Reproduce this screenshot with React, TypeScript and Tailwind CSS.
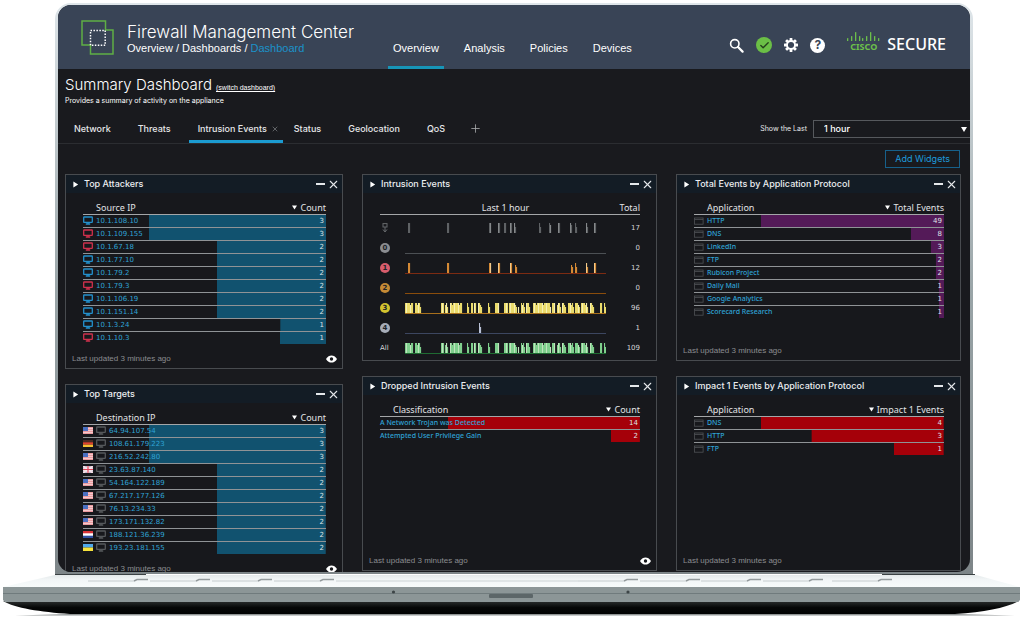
import type { ReactNode } from "react";
import { Check, Plus, X } from "lucide-react";

type Flag = "us" | "de" | "gb" | "nl" | "ua";

type Row = {
  label: string;
  count: number;
  bar: number; // share of the row width, in percent
  host?: "clean" | "infected" | "unknown";
  flag?: Flag;
};

const BLUE = "#11526f";
const PURPLE = "#541a58";
const RED = "#a50009";

const attackers: Row[] = [
  { label: "10.1.108.10", count: 3, bar: 73, host: "clean" },
  { label: "10.1.109.155", count: 3, bar: 73, host: "infected" },
  { label: "10.1.67.18", count: 2, bar: 45, host: "infected" },
  { label: "10.1.77.10", count: 2, bar: 45, host: "clean" },
  { label: "10.1.79.2", count: 2, bar: 45, host: "clean" },
  { label: "10.1.79.3", count: 2, bar: 45, host: "infected" },
  { label: "10.1.106.19", count: 2, bar: 45, host: "clean" },
  { label: "10.1.151.14", count: 2, bar: 45, host: "clean" },
  { label: "10.1.3.24", count: 1, bar: 19, host: "clean" },
  { label: "10.1.10.3", count: 1, bar: 19, host: "infected" },
];

const targets: Row[] = [
  { label: "64.94.107.54", count: 3, bar: 73, host: "unknown", flag: "us" },
  { label: "108.61.179.223", count: 3, bar: 73, host: "unknown", flag: "de" },
  { label: "216.52.242.80", count: 3, bar: 73, host: "unknown", flag: "us" },
  { label: "23.63.87.140", count: 2, bar: 45, host: "unknown", flag: "gb" },
  { label: "54.164.122.189", count: 2, bar: 45, host: "unknown", flag: "us" },
  { label: "67.217.177.126", count: 2, bar: 45, host: "unknown", flag: "us" },
  { label: "76.13.234.33", count: 2, bar: 45, host: "unknown", flag: "us" },
  { label: "173.171.132.82", count: 2, bar: 45, host: "unknown", flag: "us" },
  { label: "188.121.36.239", count: 2, bar: 45, host: "unknown", flag: "nl" },
  { label: "193.23.181.155", count: 2, bar: 45, host: "unknown", flag: "ua" },
];

const protocols: Row[] = [
  { label: "HTTP", count: 49, bar: 73 },
  { label: "DNS", count: 8, bar: 13 },
  { label: "LinkedIn", count: 3, bar: 5 },
  { label: "FTP", count: 2, bar: 3 },
  { label: "Rubicon Project", count: 2, bar: 3 },
  { label: "Daily Mail", count: 1, bar: 2 },
  { label: "Google Analytics", count: 1, bar: 2 },
  { label: "Scorecard Research", count: 1, bar: 2 },
];

const impact: Row[] = [
  { label: "DNS", count: 4, bar: 73 },
  { label: "HTTP", count: 3, bar: 53 },
  { label: "FTP", count: 1, bar: 20 },
];

const dropped: Row[] = [
  { label: "A Network Trojan was Detected", count: 14, bar: 74 },
  { label: "Attempted User Privilege Gain", count: 2, bar: 11 },
];

// [start, end] on a 201 unit wide time line
const busy = [
  [0, 8], [10, 16], [36, 39], [40, 43], [45, 57], [62, 64], [66, 68], [69, 71], [73, 77],
  [83, 85], [90, 94], [99, 103], [104, 112], [113, 114], [116, 120], [121, 125], [128, 146],
  [147, 150], [152, 156], [157, 161], [163, 169], [170, 175], [176, 183], [185, 189],
  [195, 197], [199, 201],
];
const dots = (xs: number[]) => xs.map((x) => [x, x + 2]);

const levels = [
  { id: "host", total: 17, badge: "", line: "", fill: "#5f6265", alt: "#85888a", spans: dots([3, 42, 84, 93, 99, 105, 109, 134, 144, 153, 165, 170, 181, 189]) },
  { id: "0", total: 0, badge: "#8b8d91", line: "#4c5054", fill: "", alt: "", spans: [] },
  { id: "1", total: 12, badge: "#d85d6c", line: "#7c2b12", fill: "#d58a35", alt: "#f2c98b", spans: dots([3, 42, 84, 93, 105, 110, 166, 170, 181, 189]) },
  { id: "2", total: 0, badge: "#c58a35", line: "#8a4d0c", fill: "", alt: "", spans: [] },
  { id: "3", total: 96, badge: "#d3c32f", line: "#a86f1c", fill: "#eadb6c", alt: "#f6efb4", spans: busy },
  { id: "4", total: 1, badge: "#a7adb9", line: "#3c4660", fill: "#b9c1d6", alt: "#e4e8f2", spans: dots([74]) },
  { id: "All", total: 109, badge: "", line: "#1f6b32", fill: "#7fcf8d", alt: "#bfe3bd", spans: busy },
];

function FlagIcon({ code }: { code: Flag }) {
  return (
    <svg viewBox="0 0 10 7" className="w-[10px] h-[7px] shrink-0" aria-hidden="true">
      {code === "us" && (
        <>
          <rect width="10" height="7" fill="#f3c9cb" />
          <path d="M0 .5h10M0 2.5h10M0 4.5h10M0 6.5h10" stroke="#eb9a9f" strokeWidth="1" />
          <rect width="5" height="4" fill="#4a6fc0" />
        </>
      )}
      {code === "de" && (
        <>
          <rect width="10" height="2.4" fill="#4a2a22" />
          <rect y="2.3" width="10" height="2.4" fill="#e0432f" />
          <rect y="4.7" width="10" height="2.3" fill="#f5c034" />
        </>
      )}
      {code === "gb" && (
        <>
          <rect width="10" height="7" fill="#a9a3c8" />
          <path d="M0 0l10 7M10 0L0 7" stroke="#f4dfe4" strokeWidth="2" />
          <path d="M5 0v7M0 3.5h10" stroke="#fbeef0" strokeWidth="2.6" />
          <path d="M5 0v7M0 3.5h10" stroke="#e0455a" strokeWidth="1.2" />
        </>
      )}
      {code === "nl" && (
        <>
          <rect width="10" height="7" fill="#fff" />
          <rect width="10" height="2.3" fill="#d83338" />
          <rect y="4.7" width="10" height="2.3" fill="#2e4fa0" />
        </>
      )}
      {code === "ua" && (
        <>
          <rect width="10" height="3.5" fill="#4fa8ea" />
          <rect y="3.5" width="10" height="3.5" fill="#f7e33c" />
        </>
      )}
    </svg>
  );
}

function HostIcon({ kind }: { kind: "clean" | "infected" | "unknown" }) {
  const color = { clean: "#2390cc", infected: "#d0304c", unknown: "#55585b" }[kind];
  return (
    <svg viewBox="0 0 10 9" className="w-[10px] h-[9px] shrink-0" fill="none" stroke={color} strokeWidth="1.3" aria-hidden="true">
      <rect x=".7" y="1" width="8.6" height="5.4" rx=".5" />
      <path d="M5 6.4v1.5M2.8 8h4.4" />
    </svg>
  );
}

function WindowIcon() {
  return (
    <svg viewBox="0 0 10 8" className="w-[10px] h-[8px] shrink-0" fill="none" stroke="#4f5255" strokeWidth=".8" aria-hidden="true">
      <rect x=".5" y="1" width="8.6" height="6.2" />
      <path d="M.5 2.5h8.6" />
    </svg>
  );
}

function EyeIcon() {
  return (
    <svg viewBox="0 0 11 8" className="w-[11px] h-[8px]" aria-hidden="true">
      <path d="M0 4C1.6 1.4 3.4.4 5.5.4S9.4 1.4 11 4C9.400 6.600 7.600 7.600 5.500 7.600S1.600 6.600 0 4z" fill="#fff" />
      <circle cx="5.5" cy="4" r="1.7" fill="#17181c" />
    </svg>
  );
}

function Widget({ title, tall, eye, footer = true, children }: { title: string; tall?: boolean; eye?: boolean; footer?: boolean; children: ReactNode }) {
  return (
    <section className={`flex shrink-0 flex-col border border-[#484b4f] bg-[#17181c] ${tall ? "min-h-[195px]" : "min-h-[187px]"}`}>
      <div className="flex h-[18px] items-center bg-[#131c25] pl-[7px] pr-[2px]">
        <svg viewBox="0 0 6 8" className="w-[6px] h-[7px]" aria-hidden="true">
          <path d="M0 .5l5.5 3.5L0 7.5z" fill="#fff" />
        </svg>
        <h2 className="ml-[5px] flex-1 text-[9px] leading-[14px] font-medium text-[#eceef0]">{title}</h2>
        <button type="button" aria-label="Minimize" className="flex h-3 w-[9px] items-center">
          <span className="h-[2px] w-full bg-[#e4e7ea]" />
        </button>
        <button type="button" aria-label="Close" className="ml-[2px]">
          <X className="h-[13px] w-[13px] text-[#e4e7ea]" strokeWidth={2} />
        </button>
      </div>
      <div className="flex-1 pl-[17px] pr-4">{children}</div>
      {footer && (
        <div className="flex h-[18px] items-center justify-between pl-[6px] pr-[5px] font-['Liberation_Sans',sans-serif] text-[8px] text-[#8b8d90]">
          <span>Last updated 3 minutes ago</span>
          {eye && (
            <button type="button" aria-label="View">
              <EyeIcon />
            </button>
          )}
        </div>
      )}
    </section>
  );
}

function CountTable({ name, value, rows, color, plain }: { name: string; value: string; rows: Row[]; color: string; plain?: boolean }) {
  return (
    <table className="w-full border-collapse">
      <thead>
        <tr className="h-[21px] border-b border-[#a4a6a8] font-['Noto_Sans',sans-serif] text-[9px] leading-[11px] text-[#e2e3e5]">
          <th className="p-0 pb-px pl-[13px] text-left align-bottom font-normal">{name}</th>
          <th className="p-0 pb-px text-right align-bottom font-normal">
            <div className="flex items-center justify-end gap-[3px]">
              <svg viewBox="0 0 6 5" className="w-[5px] h-[5px]" aria-hidden="true">
                <path d="M0 0h6L3 5z" fill="#fff" />
              </svg>
              {value}
            </div>
          </th>
        </tr>
      </thead>
      <tbody>
        {rows.map((row) => (
          <tr
            key={row.label}
            className="h-[13px] border-b border-[#8f9396] text-[7px] leading-[10px] last:border-b-0"
            style={{ background: `linear-gradient(to left, ${color} ${row.bar}%, transparent ${row.bar}%)` }}
          >
            <td className="p-0">
              <div className="flex items-center gap-[3px]">
                {row.flag && <FlagIcon code={row.flag} />}
                {row.host && <HostIcon kind={row.host} />}
                {!row.host && !plain && <WindowIcon />}
                <a
                  href="#"
                  className={`text-[#2fa3d6] ${row.host ? "font-['DejaVu_Sans',sans-serif]" : "font-['Noto_Sans',sans-serif] font-medium"}`}
                >
                  {row.label}
                </a>
              </div>
            </td>
            <td className="p-0 pr-[2px] text-right font-['DejaVu_Sans',sans-serif] text-[#dfe3e6]">{row.count}</td>
          </tr>
        ))}
      </tbody>
    </table>
  );
}

function Spark({ spans, fill, alt, line }: { spans: number[][]; fill: string; alt: string; line: string }) {
  const bars = spans.flatMap(([from, to]) => {
    const out = [];
    for (let x = from; x < to; x += 1) {
      const last = x === to - 1 && from % 3 !== 0;
      const drop = last ? 4 : x % 7 === 5 ? 2 : 0;
      out.push(<rect key={x} x={x} y={1 + drop} width="1.1" height={10 - drop} fill={x % 4 === 1 ? alt : fill} />);
    }
    return out;
  });
  return (
    <svg viewBox="0 0 201 12" preserveAspectRatio="none" className="h-3 w-full" aria-hidden="true">
      {bars}
      {line && <rect y="11" width="201" height="1" fill={line} />}
    </svg>
  );
}

function LevelBadge({ id, color }: { id: string; color: string }) {
  if (id === "host") {
    return (
      <svg viewBox="0 0 10 10" className="h-[10px] w-[10px]" fill="none" stroke="#66696c" aria-hidden="true">
        <rect x="3" y=".6" width="4" height="3.4" />
        <path d="M5 4v5M3 6.5L5 9l2-2.5" />
      </svg>
    );
  }
  if (!color) return <span className="text-[#d4d6d8]">{id}</span>;
  return (
    <span className="flex h-[10px] w-[10px] items-center justify-center rounded-full font-bold text-[#22252a]" style={{ backgroundColor: color }}>
      {id}
    </span>
  );
}

function IntrusionTable() {
  return (
    <table className="w-full border-collapse">
      <thead>
        <tr className="h-[21px] border-b border-[#a4a6a8] font-['Noto_Sans',sans-serif] text-[9px] leading-[11px] text-[#e2e3e5]">
          <th className="w-[25px] p-0" />
          <th className="p-0 pb-px text-center align-bottom font-normal">Last 1 hour</th>
          <th className="w-[34px] p-0 pb-px text-right align-bottom font-normal">Total</th>
        </tr>
      </thead>
      <tbody className="font-['DejaVu_Sans',sans-serif] text-[7px] leading-[10px]">
        <tr className="h-1"><td colSpan={3} className="p-0" /></tr>
        {levels.map((level) => (
          <tr key={level.id} className="h-5">
            <td className="p-0"><LevelBadge id={level.id} color={level.badge} /></td>
            <td className="p-0"><div className="flex"><Spark {...level} /></div></td>
            <td className="p-0 text-right text-[#d4d6d8]">{level.total}</td>
          </tr>
        ))}
      </tbody>
    </table>
  );
}

function Logo() {
  return (
    <svg viewBox="0 0 33 35" className="h-[35px] w-[33px]" fill="none" aria-hidden="true">
      <path d="M1 1h23.5v9H32v24H9.5v-9H1z" stroke="#5fae45" strokeWidth="1.5" />
      <path d="M9.5 10.5h14.7v14.8H9.5z" stroke="#fff" strokeWidth="1.5" strokeDasharray="1.5 1.45" />
    </svg>
  );
}

function CiscoBars() {
  const bars = [[0, 6, 3], [4, 4, 5], [8, 0, 9], [12, 4, 5], [15, 6, 3], [19, 4, 5], [23, 0, 9], [27, 4, 5], [31, 6, 3]];
  return (
    <svg viewBox="0 0 33 10" className="h-[10px] w-[33px]" aria-hidden="true">
      {bars.map(([x, y, h]) => (
        <rect key={x} x={x} y={y} width="1.3" height={h} rx=".6" fill="#6cc04a" />
      ))}
    </svg>
  );
}

function SearchIcon() {
  return (
    <svg viewBox="0 0 15 15" className="h-[15px] w-[15px]" fill="none" stroke="#fff" aria-hidden="true">
      <circle cx="5.8" cy="5.8" r="4.2" strokeWidth="1.6" />
      <path d="M9 9l4.6 4.6" strokeWidth="2.2" strokeLinecap="round" />
    </svg>
  );
}

function Gear() {
  const teeth = [0, 45, 90, 135, 180, 225, 270, 315];
  return (
    <svg viewBox="0 0 14 14" className="h-[14px] w-[14px]" aria-hidden="true">
      {teeth.map((angle) => (
        <rect key={angle} x="5.6" y="0" width="2.8" height="3" rx=".5" fill="#fff" transform={`rotate(${angle} 7 7)`} />
      ))}
      <circle cx="7" cy="7" r="4" fill="none" stroke="#fff" strokeWidth="1.9" />
    </svg>
  );
}

const nav = ["Overview", "Analysis", "Policies", "Devices"];
const tabs = ["Network", "Threats", "Intrusion Events", "Status", "Geolocation", "QoS"];

function Header() {
  return (
    <header className="flex h-16 shrink-0 items-center bg-[#394456] pl-[23px] pr-6 text-white">
      <Logo />
      <div className="ml-[13px] whitespace-nowrap pt-[2px]">
        <h1 className="text-[17px] font-light leading-5">Firewall Management Center</h1>
        <p className="font-['Liberation_Sans',sans-serif] text-[11px] leading-[13px]">
          Overview / Dashboards / <a href="#" className="text-[#1b92c9]">Dashboard</a>
        </p>
      </div>
      <nav className="ml-[34px] flex gap-[15px] self-stretch font-['Liberation_Sans',sans-serif] text-[11px]">
        {nav.map((item) => (
          <a
            key={item}
            href="#"
            className={`flex items-end border-b-[3px] px-[5px] pb-[10px] leading-4 ${item === "Overview" ? "border-[#1795b8]" : "border-transparent"}`}
          >
            {item}
          </a>
        ))}
      </nav>
      <div className="ml-auto flex items-center gap-3 pt-4">
        <button type="button" aria-label="Search"><SearchIcon /></button>
        <button type="button" aria-label="Status" className="flex h-4 w-4 items-center justify-center rounded-full bg-[#6bbf46] text-[#25401d]">
          <Check className="h-[11px] w-[11px]" strokeWidth={3} />
        </button>
        <button type="button" aria-label="Settings"><Gear /></button>
        <button type="button" aria-label="Help" className="flex h-[15px] w-[15px] items-center justify-center rounded-full bg-white text-[12px] font-bold leading-none text-[#394456]">
          ?
        </button>
      </div>
      <div className="ml-[22px] flex items-start gap-[7px] pt-[14px] font-['Noto_Sans',sans-serif]">
        <div className="flex flex-col items-center">
          <CiscoBars />
          <span className="text-[9px] font-bold leading-[9px] text-[#6cc04a]">CISCO</span>
        </div>
        <span className="text-base font-medium leading-6">SECURE</span>
      </div>
    </header>
  );
}

function TabBar() {
  return (
    <div className="flex h-[31px] items-end justify-between border-b border-[#2b2d31] pl-[7px]">
      <div className="flex gap-[2px] text-[9px] font-medium text-[#e6e7e9]">
        {tabs.map((tab) => {
          const active = tab === "Intrusion Events";
          return (
            <button
              key={tab}
              type="button"
              className={`flex h-[25px] items-center gap-1 whitespace-nowrap border-b-[3px] pl-[9px] pr-1 pb-px ${active ? "border-[#1b9bd1]" : "border-transparent"}`}
            >
              {tab}
              <X className={`h-2 w-2 ${active ? "text-[#85888b]" : "invisible"}`} />
            </button>
          );
        })}
        <button type="button" aria-label="Add tab" className="flex h-[25px] items-center pb-1 pl-[6px]">
          <Plus className="h-[13px] w-[13px] text-[#a9abad]" strokeWidth={1.5} />
        </button>
      </div>
      <div className="mb-[5px] flex items-center gap-[6px]">
        <label htmlFor="range" className="text-[7px] text-[#e6e7e9]">Show the Last</label>
        <div className="relative flex items-center">
          <select id="range" className="h-[18px] w-[157px] appearance-none border border-r-0 border-[#56595d] bg-transparent pl-[10px] text-[9px] font-medium text-white">
            <option>1 hour</option>
          </select>
          <svg viewBox="0 0 6 5" className="pointer-events-none absolute right-[3px] h-[5px] w-[6px]" aria-hidden="true">
            <path d="M0 0h6L3 5z" fill="#fff" />
          </svg>
        </div>
      </div>
    </div>
  );
}

function LaptopBase() {
  const keys = [88, 150, 212, 274, 578, 640, 701, 763, 832];
  return (
    <svg viewBox="0 0 1024 44" preserveAspectRatio="none" className="h-11 w-full shrink-0" aria-hidden="true">
      <defs>
        <linearGradient id="deck" x1="0" y1="0" x2="0" y2="1">
          <stop offset="0" stopColor="#e4e9ea" />
          <stop offset=".4" stopColor="#f2f6f7" />
          <stop offset="1" stopColor="#f7fbfb" />
        </linearGradient>
        <linearGradient id="under" x1="0" y1="0" x2="0" y2="1">
          <stop offset="0" stopColor="#2b2f2f" />
          <stop offset=".5" stopColor="#060707" />
          <stop offset="1" stopColor="#000" />
        </linearGradient>
      </defs>
      <path d="M55 1H976L1020 13H3z" fill="url(#deck)" />
      <path d="M55 0H146V1H55zM882 0H975V1H882z" fill="#3a4143" />
      <path d="M336 7H578" stroke="#cdd4d5" strokeWidth="1" />
      {keys.map((x) => (
        <g key={x} fill="none">
          <path d={`M${x} 7h46`} stroke="#c6cdce" strokeWidth="1" />
          <path d={`M${x + 46} 7l3-1.500h11`} stroke="#949b9d" strokeWidth="1.4" />
        </g>
      ))}
      <path d="M3 27H1019C1005 34 985 38 955 40H70C40 38 15 34 3 27z" fill="url(#under)" />
      <path d="M3 13H1020V26L1018 28H5L3 26z" fill="#8c9697" />
      <path d="M3 19.5H1020" stroke="#707b7d" strokeWidth="1" />
      <rect x="489" y="20" width="44" height="4" rx="1" fill="#5c6668" />
      <circle cx="393.5" cy="18" r="1.6" fill="#3d4547" />
      <circle cx="628" cy="18" r="1.6" fill="#3d4547" />
      <path d="M15 41.5L70 40H955L1015 41.5z" fill="#8f9393" />
    </svg>
  );
}

export default function App() {
  return (
    <div className="flex h-screen flex-col overflow-hidden bg-white pt-[3px] font-['Inter',sans-serif]">
      <div className="ml-[55px] mr-[51px] flex min-h-0 flex-1 flex-col rounded-t-[16px] bg-linear-to-b from-[#dfe6ea] via-[#9aa5a8] to-[#7d8588] px-[3px] pb-[2px] pt-[2px]">
        <div className="flex min-h-0 flex-1 flex-col overflow-hidden rounded-[13px] bg-[#191a1e] text-white">
          <Header />
          <main className="flex min-h-0 flex-1 flex-col">
            <div className="pl-[7px] pt-[6px]">
              <div className="flex items-baseline gap-1">
                <h2 className="text-[15px] font-light leading-5">Summary Dashboard</h2>
                <a href="#" className="font-['Liberation_Sans',sans-serif] text-[7px] underline">(switch dashboard)</a>
              </div>
              <p className="text-[7px] leading-[11px]">Provides a summary of activity on the appliance</p>
            </div>
            <div className="mt-[7px]"><TabBar /></div>
            <div className="flex justify-end pr-[10px] pt-[6px]">
              <button type="button" className="h-[18px] border border-[#17608a] px-[9px] text-[9px] text-[#1e9bdc]">Add Widgets</button>
            </div>
            <div className="mt-[6px] grid min-h-0 flex-1 grid-cols-[278fr_295fr_285fr] gap-x-[19px] pl-[7px] pr-[9px]">
              <div className="flex flex-col gap-[15px]">
                <Widget title="Top Attackers" tall eye>
                  <CountTable name="Source IP" value="Count" rows={attackers} color={BLUE} />
                </Widget>
                <Widget title="Top Targets" tall eye>
                  <CountTable name="Destination IP" value="Count" rows={targets} color={BLUE} />
                </Widget>
              </div>
              <div className="flex flex-col gap-[15px]">
                <Widget title="Intrusion Events" footer={false}>
                  <IntrusionTable />
                </Widget>
                <Widget title="Dropped Intrusion Events" tall eye>
                  <CountTable name="Classification" value="Count" rows={dropped} color={RED} plain />
                </Widget>
              </div>
              <div className="flex flex-col gap-[15px]">
                <Widget title="Total Events by Application Protocol">
                  <CountTable name="Application" value="Total Events" rows={protocols} color={PURPLE} />
                </Widget>
                <Widget title="Impact 1 Events by Application Protocol" tall>
                  <CountTable name="Application" value="Impact 1 Events" rows={impact} color={RED} />
                </Widget>
              </div>
            </div>
          </main>
        </div>
      </div>
      <LaptopBase />
    </div>
  );
}
